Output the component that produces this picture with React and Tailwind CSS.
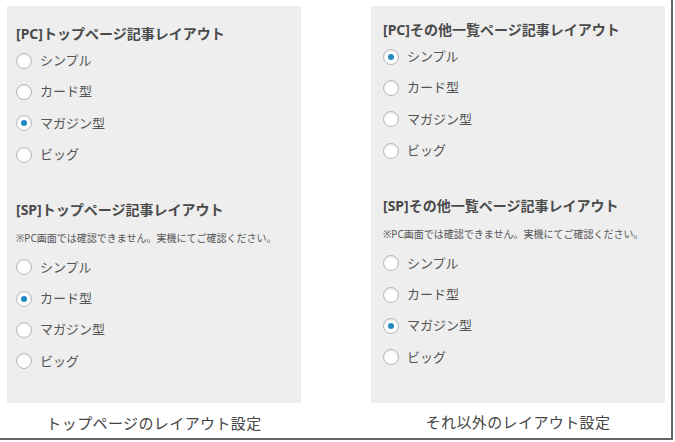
const OPTIONS = ["シンプル", "カード型", "マガジン型", "ビッグ"];

function Radio({ checked }) {
  return (
    <span className="flex h-4 w-4 shrink-0 items-center justify-center rounded-full border border-[#b4b9be] bg-white shadow-[inset_0_1px_2px_rgba(0,0,0,0.1)]">
      {checked && <span className="h-[6px] w-[6px] rounded-full bg-[#1e8cbe]" />}
    </span>
  );
}

function RadioGroup({ selected }) {
  return (
    <div className="mt-px flex flex-col">
      {OPTIONS.map((label, i) => (
        <label key={label} className="flex h-[31.4px] items-center gap-[8px] text-[13px] text-[#555]">
          <Radio checked={i === selected} />
          <span>{label}</span>
        </label>
      ))}
    </div>
  );
}

function Panel({ page, pcSelected, spSelected, padTop, padLeft }) {
  return (
    <div className={`h-[397px] w-[294px] bg-[#eeeeee] ${padTop} ${padLeft}`}>
      <h3 className="text-[14px] font-bold leading-[21px] text-[#4a4a4a]">[PC]{page}記事レイアウト</h3>
      <RadioGroup selected={pcSelected} />
      <h3 className="mt-[28px] text-[14px] font-bold leading-[21px] text-[#4a4a4a]">[SP]{page}記事レイアウト</h3>
      <p className="mt-[10px] text-[10px] leading-[16px] text-[#555]">※PC画面では確認できません。実機にてご確認ください。</p>
      <div className="mt-[6px]">
        <RadioGroup selected={spSelected} />
      </div>
    </div>
  );
}

export default function App() {
  return (
    <div className="h-[442px] w-[675px] bg-white" style={{ fontFamily: '"Noto Sans", "Noto Sans CJK JP", sans-serif' }}>
      <div className="flex h-[440px] w-[673px] gap-[70px] border-b-2 border-r-2 border-[#666] pl-[7px] pt-[6px]">
        <div className="flex flex-col items-center">
          <Panel page="トップページ" pcSelected={2} spSelected={1} padTop="pt-[17px]" padLeft="pl-[9px]" />
          <p className="mt-[10px] text-[15px] leading-[20px] tracking-[0.4px] text-[#444]">トップページのレイアウト設定</p>
        </div>
        <div className="flex flex-col items-center">
          <Panel page="その他一覧ページ" pcSelected={0} spSelected={2} padTop="pt-[13px]" padLeft="pl-[12px]" />
          <p className="mt-[9px] text-[15px] leading-[20px] tracking-[0.4px] text-[#444]">それ以外のレイアウト設定</p>
        </div>
      </div>
    </div>
  );
}
